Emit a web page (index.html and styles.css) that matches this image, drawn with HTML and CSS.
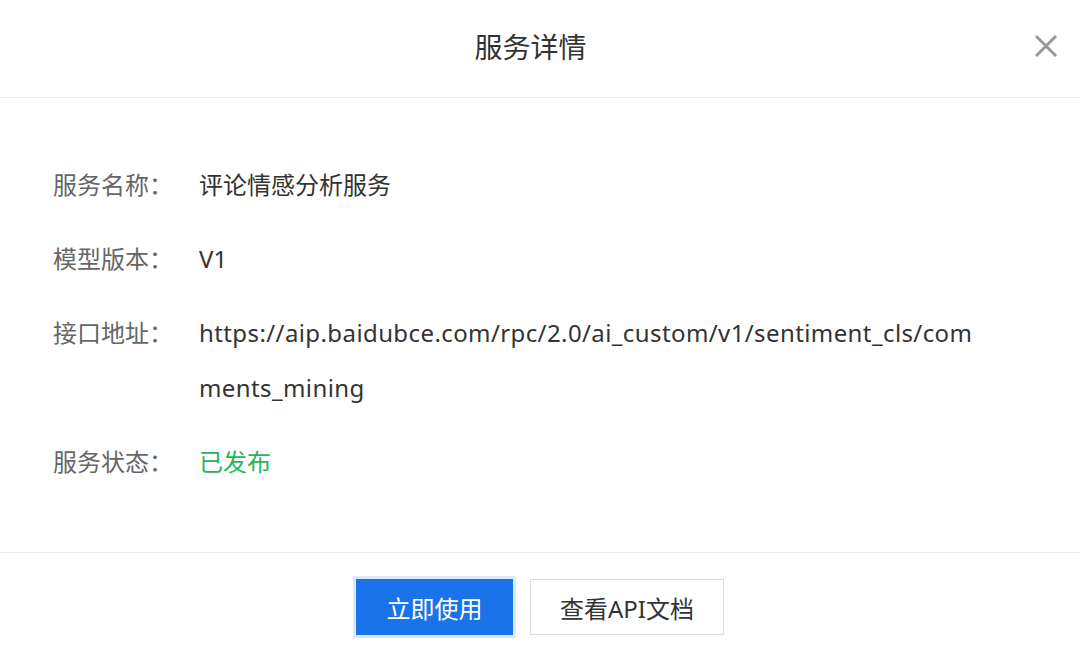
FILE: index.html
```html
<!DOCTYPE html>
<html lang="zh-CN">
<head>
<meta charset="utf-8">
<title>服务详情</title>
<link rel="stylesheet" href="styles.css">
</head>
<body>
<div class="dialog">
  <div class="header">
    <div class="title">服务详情</div>
    <button class="close" aria-label="关闭">
      <svg width="22" height="22" viewBox="0 0 22 22"><path d="M2 2L20 20M20 2L2 20" stroke="#999" stroke-width="3" stroke-linecap="square"/></svg>
    </button>
  </div>
  <div class="body">
    <div class="row"><div class="label">服务名称：</div><div class="value">评论情感分析服务</div></div>
    <div class="row"><div class="label">模型版本：</div><div class="value">V1</div></div>
    <div class="row"><div class="label">接口地址：</div><div class="value url">https://aip.baidubce.com/rpc/2.0/ai_custom/v1/sentiment_cls/comments_mining</div></div>
    <div class="row"><div class="label">服务状态：</div><div class="value status">已发布</div></div>
  </div>
  <div class="footer">
    <button class="btn primary">立即使用</button>
    <button class="btn secondary">查看API文档</button>
  </div>
</div>
</body>
</html>
```
FILE: styles.css
```css
* { box-sizing: border-box; }
html, body { margin: 0; padding: 0; background: #fff; }
body {
  font-family: "Noto Sans", "Noto Sans CJK SC", sans-serif;
  color: #333;
  width: 1080px;
  height: 651px;
  overflow: hidden;
}
.dialog { display: flex; flex-direction: column; }
.header {
  height: 98px;
  border-bottom: 1px solid #ececec;
  display: flex;
  align-items: center;
  padding: 0 23px 6px 26px;
}
.title {
  flex: 1;
  text-align: center;
  font-size: 28px;
  color: #333;
}
.close {
  border: 0;
  background: none;
  padding: 0;
  width: 22px;
  height: 22px;
  display: flex;
  cursor: pointer;
}
.body {
  padding: 59px 60px 63px 53px;
  display: flex;
  flex-direction: column;
  gap: 19px;
}
.row { display: flex; font-size: 24px; line-height: 55px; }
.label { width: 146px; flex: none; color: #666; }
.value { flex: 1; color: #333; max-width: 785px; }
.url { word-break: break-all; letter-spacing: 0.4px; }
.status { color: #25b55a; }
.footer {
  border-top: 1px solid #ececec;
  padding: 26px 0 16px;
  display: flex;
  justify-content: center;
  gap: 17px;
}
.btn {
  font-family: "Noto Sans", "Noto Sans CJK SC", sans-serif;
  font-size: 24px;
  height: 56px;
  padding: 0;
  border-radius: 0;
  white-space: nowrap;
  cursor: pointer;
}
.primary {
  background: #1a73e8;
  color: #fff;
  border: 1px solid #1a73e8;
  box-shadow: 0 0 0 3px #dce8fc;
  width: 157px;
}
.secondary {
  background: #fff;
  color: #333;
  border: 1px solid #dcdcdc;
  width: 194px;
}
```
